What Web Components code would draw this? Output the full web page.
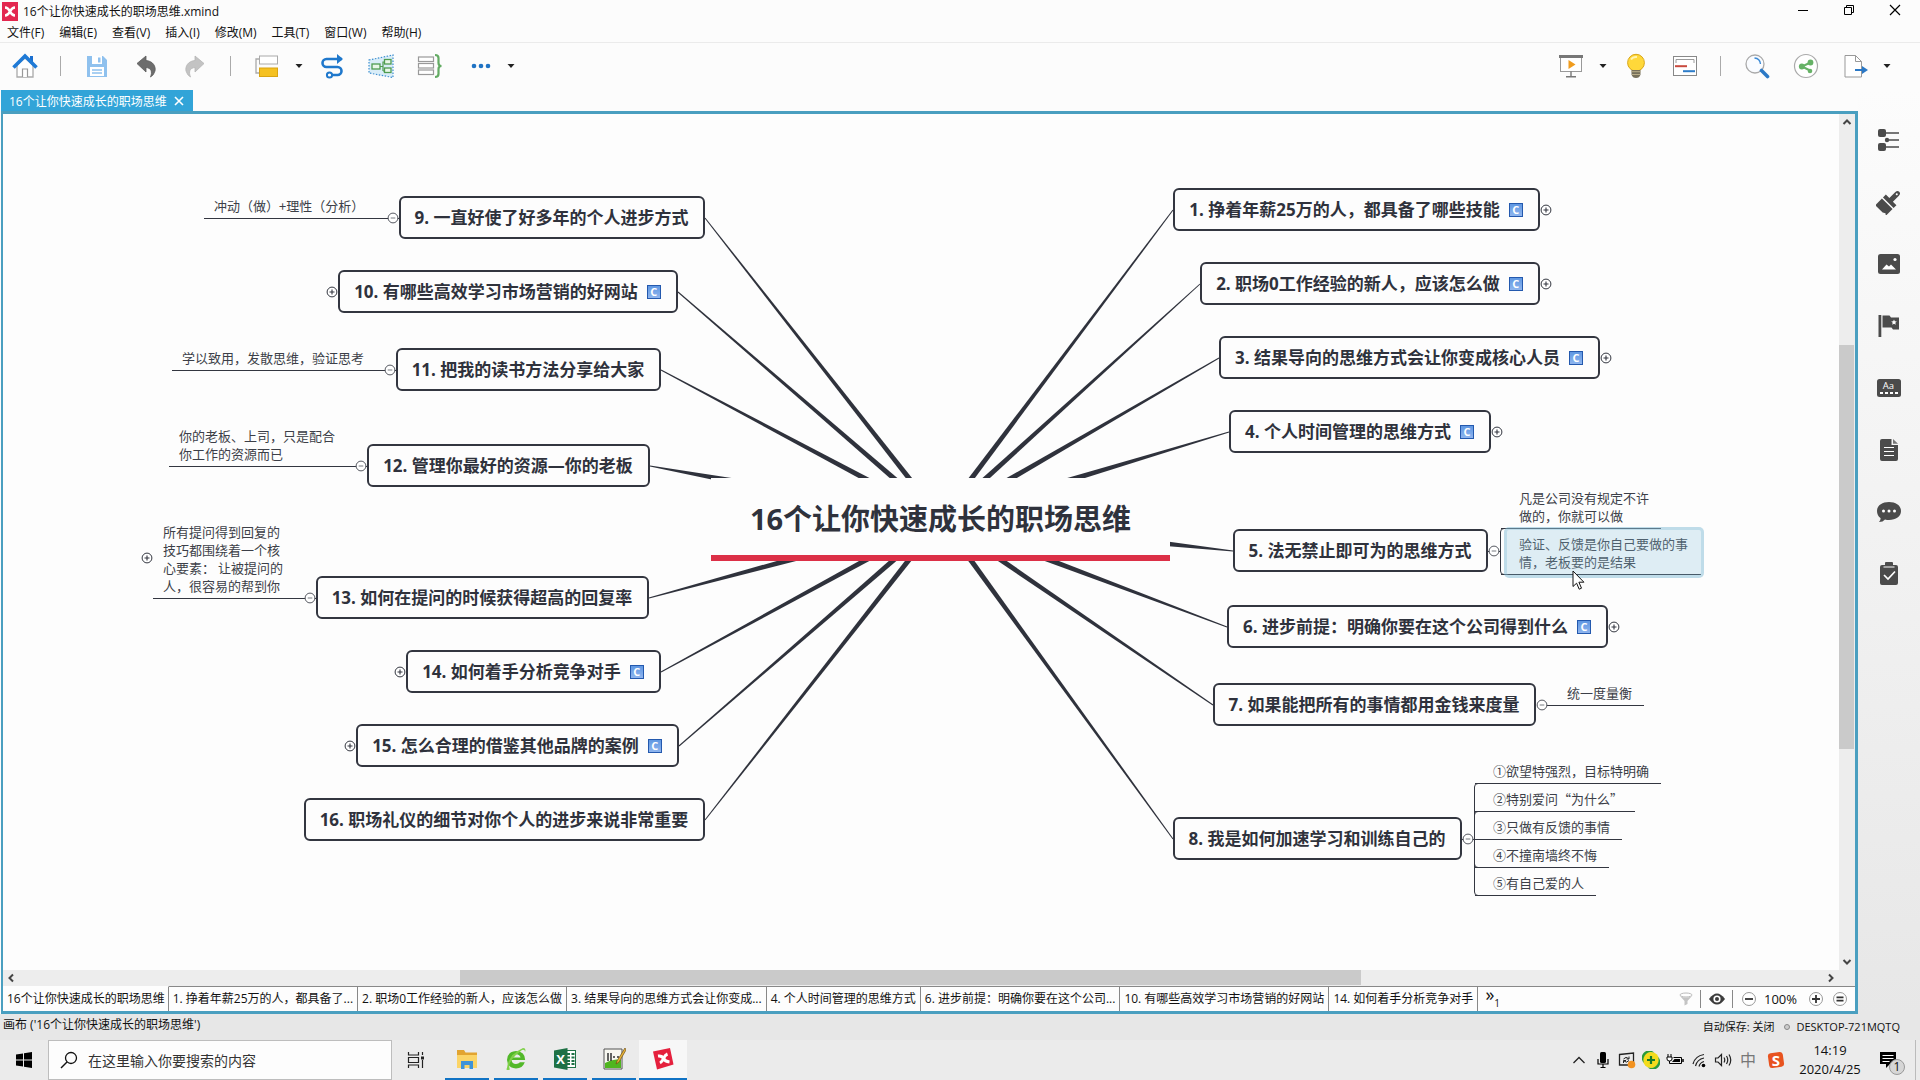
<!DOCTYPE html>
<html lang="zh-CN">
<head>
<meta charset="utf-8">
<title>16个让你快速成长的职场思维.xmind</title>
<style>
html, body { margin: 0; height: 100%; }
body { background: #fcfcfc; color: #111; font: 12px/18px "Open Sans", "Noto Sans CJK SC", sans-serif; overflow: hidden; }
</style>
</head>
<body>
<app-window>
  <title-bar slot="title">16个让你快速成长的职场思维.xmind</title-bar>
  <menu-bar slot="menu" items="文件(F)|编辑(E)|查看(V)|插入(I)|修改(M)|工具(T)|窗口(W)|帮助(H)"></menu-bar>
  <tool-bar slot="tools"></tool-bar>
  <doc-tab slot="tabs">16个让你快速成长的职场思维</doc-tab>
  <mind-map slot="canvas">
    <map-topic x="396" y="82" w="306" side="left" fold="minus">9. 一直好使了好多年的个人进步方式</map-topic>
    <map-topic x="335" y="156" w="340" side="left" fold="plus" marker>10. 有哪些高效学习市场营销的好网站</map-topic>
    <map-topic x="393" y="234" w="265" side="left" fold="minus">11. 把我的读书方法分享给大家</map-topic>
    <map-topic x="364" y="330" w="283" side="left" fold="minus">12. 管理你最好的资源—你的老板</map-topic>
    <map-topic x="313" y="462" w="333" side="left" fold="minus">13. 如何在提问的时候获得超高的回复率</map-topic>
    <map-topic x="403" y="536" w="255" side="left" fold="plus" marker>14. 如何着手分析竞争对手</map-topic>
    <map-topic x="353" y="610" w="323" side="left" fold="plus" marker>15. 怎么合理的借鉴其他品牌的案例</map-topic>
    <map-topic x="301" y="684" w="401" side="left">16. 职场礼仪的细节对你个人的进步来说非常重要</map-topic>
    <map-topic x="1170" y="74" w="367" side="right" fold="plus" marker>1. 挣着年薪25万的人，都具备了哪些技能</map-topic>
    <map-topic x="1197" y="148" w="340" side="right" fold="plus" marker>2. 职场0工作经验的新人，应该怎么做</map-topic>
    <map-topic x="1216" y="222" w="381" side="right" fold="plus" marker>3. 结果导向的思维方式会让你变成核心人员</map-topic>
    <map-topic x="1226" y="296" w="262" side="right" fold="plus" marker>4. 个人时间管理的思维方式</map-topic>
    <map-topic x="1230" y="415" w="255" side="right" fold="minus">5. 法无禁止即可为的思维方式</map-topic>
    <map-topic x="1224" y="491" w="381" side="right" fold="plus" marker>6. 进步前提：明确你要在这个公司得到什么</map-topic>
    <map-topic x="1210" y="569" w="323" side="right" fold="minus">7. 如果能把所有的事情都用金钱来度量</map-topic>
    <map-topic x="1170" y="703" w="289" side="right" fold="minus">8. 我是如何加速学习和训练自己的</map-topic>

    <map-note x="201" y="83" w="184" side="left">冲动（做）+理性（分析）</map-note>
    <map-note x="169" y="235" w="212" side="left">学以致用，发散思维，验证思考</map-note>
    <map-note x="166" y="313" w="186" side="left">你的老板、上司，只是配合<br>你工作的资源而已</map-note>
    <map-note x="150" y="409" w="151" side="left" fold>所有提问得到回复的<br>技巧都围绕着一个核<br>心要素： 让被提问的<br>人，很容易的帮到你</map-note>
    <map-note x="1498" y="375" w="160" side="right">凡是公司没有规定不许<br>做的，你就可以做</map-note>
    <map-note x="1498" y="421" w="200" side="right" selected>验证、反馈是你自己要做的事<br>情，老板要的是结果</map-note>
    <map-note x="1546" y="570" w="95" side="right">统一度量衡</map-note>
    <map-note x="1472" y="648" w="186" side="right">①欲望特强烈，目标特明确</map-note>
    <map-note x="1472" y="676" w="160" side="right">②特别爱问“为什么”</map-note>
    <map-note x="1472" y="704" w="147" side="right">③只做有反馈的事情</map-note>
    <map-note x="1472" y="732" w="134" side="right">④不撞南墙终不悔</map-note>
    <map-note x="1472" y="760" w="121" side="right">⑤有自己爱的人</map-note>
    <span slot="root">16个让你快速成长的职场思维</span>
  </mind-map>
  <sheet-bar slot="sheets" items="16个让你快速成长的职场思维|1. 挣着年薪25万的人，都具备了...|2. 职场0工作经验的新人，应该怎么做|3. 结果导向的思维方式会让你变成...|4. 个人时间管理的思维方式|6. 进步前提：明确你要在这个公司...|10. 有哪些高效学习市场营销的好网站|14. 如何着手分析竞争对手"></sheet-bar>
  <side-bar slot="side"></side-bar>
  <status-bar slot="status"><span>画布 ('16个让你快速成长的职场思维')</span><span slot="save">自动保存: 关闭</span><span slot="host">DESKTOP-721MQTQ</span></status-bar>
  <task-bar slot="taskbar"></task-bar>
</app-window>

<script>
const RESET = `*{box-sizing:border-box} button{border:0;background:none;padding:0;margin:0;font:inherit;color:inherit;display:flex;align-items:center;justify-content:center} svg{display:block}`;

const ICONS = {
  logo: [16, 20, `<rect width="16" height="19" y="0" fill="#e32850"/><path d="M3 5.500q3 0 5 4q2 4 5 4M3 13.500q3 0 5-4q2-4 5-4" fill="none" stroke="#fff" stroke-width="2.600"/>`],
  home: [26, 26, `<path d="M5 12v12h16V12l-8-7z" fill="#fff" stroke="#aaa" stroke-width="1.300"/><path d="M10.500 24v-8h5v8" fill="#fff" stroke="#999" stroke-width="1.200"/><path d="M18 3h3v6h-3z" fill="#1b6fd0"/><path d="M1.500 14.500L13 3l11.500 11.500" fill="none" stroke="#1f7ad6" stroke-width="3.600"/>`],
  save: [26, 26, `<path d="M3 3h16l4 4v17H3z" fill="#8fc1ee"/><path d="M8 3h10v8H8z" fill="#fff"/><path d="M14 4.500h2.500v5H14z" fill="#8fc1ee"/><path d="M6 14h14v9H6z" fill="#fff"/><path d="M8 17h10M8 20h10" stroke="#8fc1ee" stroke-width="1.300"/>`],
  undo: [26, 26, `<path d="M4 10.500L13 3v4.500c7 .5 10 6 9 10.500q-1 4-4.500 6c2-5 1-9-4.500-9.500V19z" fill="#6d6d6d" stroke="#5a5a5a" stroke-width=".8"/>`],
  redo: [26, 26, `<path d="M22 10.500L13 3v4.500C6 8 3 13.500 4 18q1 4 4.500 6C6.500 19 7.500 15 13 14.500V19z" fill="#c3c3c3" stroke="#b5b5b5" stroke-width=".8"/>`],
  topic: [26, 26, `<path d="M5 6H2v14h4" fill="none" stroke="#aaa" stroke-width="1.300"/><rect x="5.500" y="3" width="18" height="8" fill="#fff" stroke="#aaa"/><rect x="5.500" y="15" width="18" height="8.500" fill="#f5c121" stroke="#d9a412"/>`],
  relation: [26, 26, `<path d="M23 6H7.500a4 4 0 0 0 0 8h11a3.700 3.700 0 0 1 0 8H12" fill="none" stroke="#1f78cc" stroke-width="2.600"/><path d="M18 1l6 5-6 5z" fill="#1f78cc"/><circle cx="10.500" cy="22" r="2.600" fill="#fff" stroke="#1f78cc" stroke-width="2"/>`],
  boundary: [28, 26, `<path d="M2 7L26 2v22.500L2 20z" fill="#d9edf8" stroke="#3e8fd0" stroke-width="1.200" stroke-dasharray="1.500 1.500"/><path d="M13 13.500h3M16 18V9h2M16 18h2" stroke="#4f9c50" fill="none" stroke-width="1.200"/><rect x="5" y="11" width="8" height="5" fill="#e8f7e8" stroke="#4f9c50" stroke-width="1.300"/><rect x="17.500" y="6.500" width="6.500" height="4.500" fill="#e8f7e8" stroke="#4f9c50" stroke-width="1.300"/><rect x="17.500" y="15" width="6.500" height="4.500" fill="#e8f7e8" stroke="#4f9c50" stroke-width="1.300"/>`],
  summary: [26, 26, `<g fill="#fff" stroke="#999" stroke-width="1.200"><rect x="1.500" y="4" width="15" height="4.500"/><rect x="1.500" y="10.500" width="15" height="4.500"/><rect x="1.500" y="17" width="15" height="4.500"/></g><path d="M18 2q3.500 0 3.500 3V10q0 3 3 3q-3 0-3 3v5q0 3-3.500 3" fill="none" stroke="#63ab63" stroke-width="2.200"/>`],
  dots: [26, 26, `<g fill="#1f73c4"><circle cx="8" cy="13" r="2.300"/><circle cx="15" cy="13" r="2.300"/><circle cx="22" cy="13" r="2.300"/></g>`],
  caret: [8, 6, `<path d="M0.500 1h7L4 5z" fill="#222"/>`],
  present: [26, 26, `<rect x="2.500" y="4" width="21" height="14.500" fill="#fff" stroke="#999"/><rect x="1" y="2" width="24" height="3" fill="#777"/><path d="M10.500 7v9l7-4.500z" fill="#f09c1e"/><path d="M13 18.500v5M8 23.700h10" stroke="#777" stroke-width="1.400"/>`],
  bulb: [26, 26, `<circle cx="13" cy="9.700" r="8.400" fill="#ffd83a" stroke="#d9a616"/><path d="M8 6.500q2-3 6-2.500" stroke="#fff3b0" fill="none" stroke-width="2"/><path d="M8.500 17h9v4.500q-1 3.500-4.500 3.500t-4.500-3.500z" fill="#77705a"/><path d="M8.500 18.700h9M9 21.500h8" stroke="#b9ad88" stroke-width="1"/>`],
  gantt: [26, 26, `<rect x="1.500" y="3.500" width="23" height="19" fill="#fff" stroke="#888"/><path d="M4 10V6.500h18V10" fill="none" stroke="#9a9a9a"/><path d="M3 13.200h12" stroke="#c94a3e" stroke-width="2"/><path d="M11 18.200h12" stroke="#2d7cc8" stroke-width="2"/>`],
  search: [26, 26, `<circle cx="11" cy="11" r="9" fill="#fafcff" stroke="#aaa" stroke-width="1.300"/><path d="M10.500 5q5.500.5 6 6" stroke="#3c8ad6" fill="none" stroke-width="1.400"/><path d="M17.500 17.500l6 6" stroke="#2c79c6" stroke-width="3.600" stroke-linecap="round"/>`],
  share: [26, 26, `<circle cx="13" cy="13" r="11.500" fill="#fff" stroke="#aaa" stroke-width="1.200"/><path d="M17.500 9.500L9 13.500l8 4" fill="none" stroke="#66b266" stroke-width="2"/><g fill="#66b266"><circle cx="17.500" cy="9.500" r="2.900"/><circle cx="8.800" cy="13.500" r="2.900"/><circle cx="17" cy="18" r="2.300"/></g>`],
  export: [26, 26, `<path d="M3 2.500h10.500l6 6v15.500H3z" fill="#fff" stroke="#999"/><path d="M13.500 2.500v6h6" fill="none" stroke="#999"/><path d="M13 17h8" stroke="#2b78c5" stroke-width="2"/><path d="M20 13l6 4-6 4z" fill="#2b78c5"/>`],
  min: [12, 12, `<path d="M1 6.500h10" stroke="#000"/>`],
  restore: [12, 12, `<path d="M1.500 3.500h7v7h-7zM3.500 3.500v-2h7v7h-2" fill="none" stroke="#000"/>`],
  close: [12, 12, `<path d="M1 1l10 10M11 1L1 11" stroke="#000" stroke-width="1.200"/>`],
  tabclose: [12, 12, `<path d="M2 2l8 8M10 2l-8 8" stroke="#fff" stroke-width="1.600"/>`],
  outline: [24, 24, `<g fill="#4b4b4b"><rect x="1" y="1" width="8" height="8" rx="2"/><rect x="1" y="15" width="8" height="8" rx="2"/><circle cx="10" cy="12" r="2.200"/></g><path d="M9 5h13M12 12h10M9 19h13" stroke="#4b4b4b" stroke-width="1.600"/>`],
  brush: [26, 26, `<g transform="rotate(45 13 13)" fill="#4b4b4b"><path d="M10.500 1.500q0-3 2.500-3t2.500 3V10h5v4h-15v-4h5z"/><path d="M5.500 15.500h15V25l-2-1.500L16 25H5.500z"/><circle cx="13" cy="2" r="1" fill="#fff"/></g>`],
  image: [24, 24, `<rect x="1" y="2" width="22" height="20" rx="2.500" fill="#4b4b4b"/><path d="M5 17.500l4.500-5 2.500 2 2-2 5 5z" fill="#fff"/><circle cx="18" cy="7.500" r="1.600" fill="#fff"/>`],
  flag: [24, 24, `<path d="M1.500 1h2.800v22H1.500zM5.500 1.500h7l1.500 2h8v12h-6l-1.500-2h-9z" fill="#4b4b4b"/><path d="M17 5.500l.8 1.800 2 .2-1.500 1.300.5 2-1.800-1.100-1.800 1.100.5-2-1.500-1.300 2-.2z" fill="#fff"/>`],
  label: [26, 20, `<rect x="1" y="1" width="24" height="18" rx="2.500" fill="#4b4b4b"/><text x="12.500" y="11" font-size="9.500" font-family="Open Sans" text-anchor="middle" fill="#fff">Aa</text><path d="M4 15h18" stroke="#fff" stroke-width="2" stroke-dasharray="3 2"/>`],
  note: [20, 24, `<path d="M3 1h9.500v6H19v14q0 2-2 2H3q-2 0-2-2V3q0-2 2-2z" fill="#4b4b4b"/><path d="M14 1l5 4.800h-5z" fill="#777"/><path d="M5 9.500h10M5 13.500h10M5 17.500h10" stroke="#fff" stroke-width="1.200"/>`],
  chat: [26, 24, `<path d="M13 2c7 0 12 3.500 12 9s-5 9-12 9q-2 0-4-.5Q7 22 3 22q2-2 1.500-4Q1 15.500 1 11c0-5.500 5-9 12-9z" fill="#4b4b4b"/><g fill="#fff"><circle cx="7.500" cy="11" r="1.500"/><circle cx="13" cy="11" r="1.500"/><circle cx="18.500" cy="11" r="1.500"/></g>`],
  task: [20, 26, `<path d="M3 4h3V2q0-1 1-1h6q1 0 1 1v2h3q2 0 2 2v16q0 2-2 2H3q-2 0-2-2V6q0-2 2-2z" fill="#4b4b4b"/><path d="M4.500 6h11" stroke="#fff"/><path d="M5 14l4 4 7-7.500" fill="none" stroke="#fff" stroke-width="1.700"/>`],
  up: [10, 8, `<path d="M1.500 6L5 2.500 8.500 6" fill="none" stroke="#444" stroke-width="2"/>`],
  down: [10, 8, `<path d="M1.500 2L5 5.500 8.500 2" fill="none" stroke="#444" stroke-width="2"/>`],
  left: [8, 10, `<path d="M6 1.500L2.500 5 6 8.500" fill="none" stroke="#444" stroke-width="2"/>`],
  right: [8, 10, `<path d="M2 1.500L5.500 5 2 8.500" fill="none" stroke="#444" stroke-width="2"/>`],
  plus: [12, 12, `<circle cx="6" cy="6" r="4.900" fill="#fff" stroke="#333640"/><path d="M3.500 6h5M6 3.500v5" stroke="#333640" stroke-width="1.100"/>`],
  minus: [12, 12, `<circle cx="6" cy="6" r="4.900" fill="#fff" stroke="#555860"/><path d="M3.700 6h4.600" stroke="#777a80"/>`],
  cursor: [14, 22, `<path d="M1 1v15.500l3.600-3.300 2.600 6 2.300-1-2.600-6h5z" fill="#fff" stroke="#111"/>`],
  filter: [14, 14, `<ellipse cx="7" cy="3" rx="6" ry="2" fill="#fff" stroke="#bbb"/><path d="M1 4l4.500 5v4.500l3-1.500V9L13 4q-6 3-12 0z" fill="#c4c4c4"/>`],
  eye: [16, 14, `<path d="M0 7q8-11 16 0q-8 11-16 0z" fill="#3c3c3c"/><circle cx="8" cy="7" r="3.600" fill="#fff"/><circle cx="8" cy="7" r="2" fill="#3c3c3c"/>`],
  zoomout: [16, 16, `<circle cx="8" cy="8" r="6.500" fill="#fff" stroke="#999"/><path d="M4 8h8" stroke="#333" stroke-width="1.800"/>`],
  zoomin: [16, 16, `<circle cx="8" cy="8" r="6.500" fill="#fff" stroke="#999"/><path d="M4 8h8M8 4v8" stroke="#333" stroke-width="1.800"/>`],
  zoomfit: [16, 16, `<circle cx="8" cy="8" r="6.500" fill="#fff" stroke="#999"/><path d="M4.500 6.300h7M4.500 9.700h7" stroke="#333" stroke-width="1.700"/>`],
  start: [18, 18, `<path d="M1 3.500l7-1v6H1zM9 2.300L17 1v7.500H9zM1 9.500h7v6l-7-1zM9 9.500h8V17l-8-1.300z" fill="#000"/>`],
  find: [18, 18, `<circle cx="11" cy="7" r="5.500" fill="none" stroke="#111" stroke-width="1.300"/><path d="M7 11l-6 6" stroke="#111" stroke-width="1.400"/>`],
  taskview: [18, 18, `<path d="M1.500 1v3h10V1M1.500 17v-3h10v3M1.500 6.500h10v5h-10zM15.500 1v3M15.500 9v8" fill="none" stroke="#222" stroke-width="1.200"/><path d="M14 5.500h3v3h-3z" fill="#222"/>`],
  folder: [24, 24, `<path d="M2 3h7l1.500 2.500H22V21H2z" fill="#e2a431"/><path d="M2 8h20v13H2z" fill="#fbd467"/><path d="M6 22v-8h12v8h-3.500v-4h-5v4z" fill="#3f93d8"/>`],
  browser: [24, 24, `<path d="M16.500 13H7.500q.5 4 4.500 4 2.500 0 4-1.700h4.800Q18.500 21.500 12 21.500 3.500 21 3 13 3.500 4.500 12 4q9 .5 9.200 9zM7.700 10.500h8.800Q16 7.500 12 7.300q-4 .2-4.300 3.200z" fill="#52b829"/><path d="M3 21q-2 3 3 1.500Q2 15 18 3q3-1 3 2 1.500-4-2-4Q4 8 3 21z" fill="#7fd148"/>`],
  excel: [24, 24, `<rect x="11" y="3.500" width="11.500" height="17" fill="#fff" stroke="#1e7145"/><path d="M14 7h3M18.500 7h3M14 10.500h3M18.500 10.500h3M14 14h3M18.500 14h3M14 17h3M18.500 17h3" stroke="#1e7145" stroke-width="1.800"/><path d="M1 3.500L14.500 1v22L1 20.500z" fill="#1e7145"/><text x="7.700" y="17" font-size="13" font-weight="700" font-family="Open Sans" text-anchor="middle" fill="#fff">X</text>`],
  editor: [24, 24, `<path d="M2 2h18v20H2z" fill="#f7f7f0" stroke="#555"/><path d="M3 16q8-5 16-3v8H3z" fill="#4fb51f"/><path d="M6 6v8M9 6v8M11 10h2M15 10h2" stroke="#333" stroke-width="1.500"/><path d="M23 1l-8 13-1 3 3-2 7-12z" fill="#e9b638" stroke="#704c12" stroke-width=".7"/>`],
  xmind: [24, 24, `<path d="M2 4.500L19 1l3.500 16.500L6 22.500z" fill="#e5203d"/><path d="M7 9q4-.5 5.500 2.500T18.500 15M9 16q2-1 3.500-4.500T16.500 7" fill="none" stroke="#fff" stroke-width="3"/>`],
  chevron: [14, 10, `<path d="M1.500 8L7 2.500 12.500 8" fill="none" stroke="#222" stroke-width="1.300"/>`],
  mic: [14, 18, `<rect x="4" y="1" width="6" height="11" rx="1.500"/><path d="M2 8v5h10V8M7 13v3M4.500 16.500h5" fill="none" stroke="#000" stroke-width="1.200"/>`],
  sync: [18, 18, `<path d="M1.500 3.500L15.500 2v12H1.500z" fill="none" stroke="#222" stroke-width="1.300"/><path d="M5.500 8q2.500-3 5-.5M11 9.500q-2.500 3-5 .5M11 5.500v2.500H8.500M5.500 12V9.500H8" fill="none" stroke="#222"/><circle cx="13.500" cy="13.500" r="3.800" fill="#f29321"/>`],
  guard: [18, 18, `<circle cx="9" cy="9" r="8" fill="#f3dc1c"/><path d="M2 12A8 8 0 0 1 9 1l3 .5A7 7 0 0 0 2 12zM16 6A8 8 0 0 1 9 17l-3-.5A7 7 0 0 0 16 6z" fill="#2a9b38"/><path d="M5 9h8M9 5v8" stroke="#157a28" stroke-width="2.200"/>`],
  battery: [18, 14, `<path d="M7.500 4.500h8v6h-11" fill="none" stroke="#000"/><path d="M8.500 6h5.500v3H6z" fill="#000"/><path d="M17 6v3" stroke="#000" stroke-width="1.500"/><path d="M2 1v3M5 1v3M1 4h5v2q0 2-2.500 2T1 6zM3.500 8v2.500h1.500" fill="#fff" stroke="#000"/>`],
  wifi: [16, 16, `<g fill="none" stroke="#222" stroke-width="1.200"><path d="M2 12Q4 4 13 2.500M4.500 14Q6 7.500 13 6M8 14.500q1-4 5-5"/></g><circle cx="12.500" cy="13.500" r="1.800"/>`],
  sound: [18, 16, `<path d="M1.500 6h2.500l3.500-3.500v11L4 10H1.500z" fill="none" stroke="#222" stroke-width="1.200"/><path d="M10 5.500q1.500 2.500 0 5M12.500 4q2.500 4 0 8M15 2.500q3.500 5.500 0 11" fill="none" stroke="#222" stroke-width="1.200"/>`],
  sogou: [18, 18, `<rect x="1.500" y="1.500" width="15" height="15" rx="3" fill="#e8531f" transform="rotate(-8 9 9)"/><text x="9" y="14.500" font-size="15" font-weight="700" font-family="Open Sans" text-anchor="middle" fill="#fff">S</text>`],
  inbox: [18, 18, `<path d="M1 1h16v12h-6l-4 4v-4H1z"/><path d="M3.500 4.500h11M3.500 7.500h11M3.500 10.500h7" stroke="#fff" stroke-width="1.200"/>`]
};
const icon = n => `<ui-icon name="${n}"></ui-icon>`;

function define(tag, render, after) {
  customElements.define(tag, class extends HTMLElement {
    constructor() { super(); this.attachShadow({ mode: 'open' }); }
    connectedCallback() {
      this.shadowRoot.innerHTML = `<style>:host{box-sizing:border-box}${RESET}</style>` + render(this);
      if (after) after(this);
    }
  });
}

define('ui-icon', el => {
  const [w, h, body] = ICONS[el.getAttribute('name')];
  return `<style>:host{display:block;flex:none}</style><svg width="${w}" height="${h}" viewBox="0 0 ${w} ${h}" aria-hidden="true">${body}</svg>`;
});

define('app-window', () => `<style>
  :host{display:flex;flex-direction:column;height:100vh}
  .main{flex:1;min-height:0;display:flex;padding-left:1px}
  .work{flex:1;min-width:0;display:flex;flex-direction:column}
  .frame{flex:1;min-height:0;display:flex;flex-direction:column;border:3px solid #4a9fc0;border-left-width:2px;background:#fdfdfd}
  .view{flex:1;min-height:0;display:flex}
  .canvas{flex:1;min-width:0;display:flex}
  .bar{background:#ededed;display:flex;align-items:center}
  .v{width:16px;flex-direction:column;padding-right:1px}
  .h{height:16px;padding:0 16px 1px 0}
  .bar button{width:16px;height:16px;flex:none}
  .thumb{background:#cacaca;align-self:stretch}
</style>
<slot name="title"></slot><slot name="menu"></slot><slot name="tools"></slot>
<div class="main"><div class="work"><slot name="tabs"></slot>
  <div class="frame">
    <div class="view"><div class="canvas"><slot name="canvas"></slot></div>
      <div class="bar v"><button aria-label="向上滚动">${icon('up')}</button><i style="flex:215"></i><i class="thumb" style="flex:404"></i><i style="flex:205"></i><button aria-label="向下滚动">${icon('down')}</button></div>
    </div>
    <div class="bar h"><button aria-label="向左滚动">${icon('left')}</button><i style="flex:441"></i><i class="thumb" style="flex:901"></i><i style="flex:462"></i><button aria-label="向右滚动">${icon('right')}</button></div>
    <slot name="sheets"></slot>
  </div></div>
  <slot name="side"></slot></div>
<slot name="status"></slot><slot name="taskbar"></slot>`);

define('title-bar', () => `<style>
  :host{display:flex;align-items:center;height:24px;padding-left:2px;gap:5px;flex:none}
  .win{margin-left:auto;display:flex;align-self:flex-start;padding-right:2px}
  .win button{width:46px;height:20px}
</style>${icon('logo')}<slot></slot><div class="win"><button aria-label="最小化">${icon('min')}</button><button aria-label="还原">${icon('restore')}</button><button aria-label="关闭">${icon('close')}</button></div>`);

define('menu-bar', el => `<style>
  :host{display:block;flex:none;border-bottom:1px solid #ebebeb}
  nav{display:flex;gap:15px;padding-left:7px;height:18px}
</style><nav>${el.getAttribute('items').split('|').map(t => `<button>${t}</button>`).join('')}</nav>`);

const tool = (n, l) => n === '|' ? '<i class="sep"></i>' : `<button class="${n === 'caret' ? 'c' : 't'}" aria-label="${l}">${icon(n)}</button>`;
define('tool-bar', () => `<style>
  :host{display:flex;justify-content:space-between;height:47px;padding:0 25px 2px 0;flex:none}
  div{display:flex;align-items:center}
  .t{width:49px;height:36px}.c{width:16px;height:36px}
  .sep{width:1px;height:20px;margin:0 11px;background:#aaa}
</style>
<div>${[['home','主页'],['|'],['save','保存'],['undo','撤销'],['redo','重做'],['|'],['topic','主题'],['caret','更多主题'],['relation','联系'],['boundary','外框'],['summary','概要'],['dots','更多'],['caret','更多选项']].map(a => tool(...a)).join('')}</div>
<div>${[['present','演示'],['caret','演示选项'],['bulb','头脑风暴'],['gantt','甘特图'],['|'],['search','搜索'],['share','分享'],['export','导出'],['caret','导出选项']].map(a => tool(...a)).join('')}</div>`);

define('doc-tab', () => `<style>
  :host{display:flex;height:21px;flex:none}
  div{display:flex;align-items:center;gap:5px;padding:2px 7px 0 8px;background:#32a4d8;color:#fff}
  button{width:14px;height:18px;padding-bottom:2px}
</style><div><slot></slot><button aria-label="关闭标签">${icon('tabclose')}</button></div>`);

const TEXT = '#2f323c';

// Tapered connectors: thin at the topic, full width where they meet the root's box.
function connectors(el) {
  const cx = 938, cy = 405, hw = 230, hh = 42;
  return [...el.querySelectorAll('map-topic')].map(t => {
    const x = +t.getAttribute('x') + (t.getAttribute('side') === 'left' ? +t.getAttribute('w') : 0);
    const y = +t.getAttribute('y') + 22;
    const dx = x - cx, dy = y - cy, len = Math.hypot(dx, dy);
    const edge = 1 - Math.min(hw / Math.abs(dx), hh / Math.abs(dy));
    const a = 0.5, b = a + 2 / Math.max(edge, 0.25);
    const nx = -dy / len, ny = dx / len, p = (X, Y, k) => `${X + nx * k},${Y + ny * k}`;
    return `<polygon points="${p(x, y, a)} ${p(cx, cy, b)} ${p(cx, cy, -b)} ${p(x, y, -a)}"/>`;
  }).join('');
}
define('mind-map', el => `<style>
  :host{display:block;flex:1;position:relative;overflow:hidden;background:#fdfdfd;color:${TEXT}}
  svg{position:absolute;left:0;top:0;width:100%;height:100%}
  .root{position:absolute;left:708px;top:364px;width:459px;height:83px;display:flex;align-items:center;justify-content:center;background:#fdfdfd;border-bottom:6px solid #dc3047;font-size:29px;line-height:40px;font-weight:700;padding-top:4px}
  .ptr{position:absolute;left:1569px;top:456px}
</style>
<svg fill="${TEXT}">${connectors(el)}<g fill="none" stroke="#333640">
<path d="M1482 437.500h15.500M1501 414.500q-3.500 0-3.500 3.500v39q0 3.500 3.500 3.500M1534 591.500h12M1456 725.500h16M1475 669.500q-3.500 0-3.500 3.500v105q0 3.500 3.500 3.500M1475 697.500q-3.500 0-3.500 3.500M1475 753.500q-3.500 0-3.500-3.500M380 104.500h16M380 256.500h14M350 352.500h14M300 484.500h13"/></g></svg>
<div class="root"><slot name="root"></slot></div><slot></slot><div class="ptr">${icon('cursor')}</div>`);

const place = el => { el.style.left = el.getAttribute('x') + 'px'; el.style.top = el.getAttribute('y') + 'px'; el.style.width = el.getAttribute('w') + 'px'; };

define('map-topic', el => `<style>
  :host{position:absolute;display:flex;align-items:center;justify-content:center;gap:9px;height:43px;padding:1px 1px 0 0;border:2px solid #333640;border-radius:6px;background:#fdfdfd;font-size:17px;line-height:24px;font-weight:700;white-space:nowrap}
  .c{width:14px;height:14px;background:linear-gradient(#5f97e2,#8fb5ee);border:1px solid #2459ae;color:#fff;font-size:11px;line-height:12px;text-align:center}
  button{position:absolute;top:14px;width:12px;height:12px}
  :host([side=left]) button{right:100%;margin-right:2px}
  :host([side=right]) button{left:100%;margin-left:2px}
</style><slot></slot>${el.hasAttribute('marker') ? '<span class="c">C</span>' : ''}${el.hasAttribute('fold') ? `<button aria-label="展开或折叠">${icon(el.getAttribute('fold'))}</button>` : ''}`, place);

define('map-note', () => `<style>
  :host{position:absolute;display:block;border-bottom:1px solid #333640;padding:0 0 3px 10px;font:13px/18px "Noto Sans CJK SC",sans-serif;color:#3c3f48;white-space:nowrap}
  :host([side=right]){padding-left:18px}
  button{position:absolute;right:100%;top:29px;margin-right:0;display:none}
  :host([fold]) button{display:flex}
  i{display:none;position:absolute;inset:-8px -3px -4px 3px;background:rgba(135,195,220,.26);border:3px solid rgba(130,185,212,.34);border-radius:5px}
  :host([selected]) i{display:block}
</style><slot></slot><i></i><button aria-label="展开">${icon('plus')}</button>`, place);

define('sheet-bar', el => `<style>
  :host{display:flex;height:25px;flex:none;background:#fdfdfd;color:#111;white-space:nowrap}
  .tabs{display:flex;flex:1;min-width:0}
  .tabs button{padding:0 4px 1px 4px;border-right:1px solid #888;border-top:1px solid #888;flex:none}
  .tabs button:first-child{border-top-color:#fdfdfd;padding-right:3px}
  .rest{flex:1;border-top:1px solid #888;display:flex;padding-left:7px;font-size:18px;line-height:14px}
  sub{font-size:10px;line-height:16px;align-self:flex-end}
  .zoom{display:flex;align-items:center;border-top:1px solid #888;padding-right:3px}
  .zoom button{height:20px;width:24px}
  .zoom .f{width:28px}.zoom .e{width:31px}
  .sep{width:1px;height:18px;background:#888}
  output{width:43px;text-align:center;font-size:13px;padding-right:4px}
  .zoom .o{margin-left:4px}
</style><div class="tabs">${el.getAttribute('items').split('|').map(t => `<button>${t}</button>`).join('')}<div class="rest">»<sub>1</sub></div></div>
<div class="zoom"><button class="f" aria-label="筛选">${icon('filter')}</button><i class="sep"></i><button class="e" aria-label="显示">${icon('eye')}</button><i class="sep"></i><button class="o" aria-label="缩小">${icon('zoomout')}</button><output>100%</output><button aria-label="放大">${icon('zoomin')}</button><button aria-label="适合">${icon('zoomfit')}</button></div>`);

define('side-bar', () => `<style>
  :host{display:flex;flex-direction:column;width:62px;padding-top:19px;background:linear-gradient(#fcfcfc,#e7e7e7);flex:none}
  button{height:62px;width:61px}
</style>${[['outline','大纲'],['brush','格式'],['image','图片'],['flag','图标'],['label','标签'],['note','备注'],['chat','批注'],['task','任务']].map(([n, l]) => `<button aria-label="${l}">${icon(n)}</button>`).join('')}`);

define('status-bar', () => `<style>
  :host{display:flex;align-items:center;height:26px;padding:0 20px 0 3px;background:#e7e7e7;flex:none}
  .l{padding-bottom:4px}
  .r{margin-left:auto;display:flex;align-items:center;gap:6px;font-size:11px}
  .dot{width:6px;height:6px;border:1px solid #888;border-radius:50%;background:#ccc;margin-left:4px}
</style><div class="l"><slot></slot></div><div class="r"><slot name="save"></slot><i class="dot"></i><slot name="host"></slot></div>`);

define('task-bar', () => `<style>
  :host{display:flex;height:40px;background:#ebebeb;flex:none;font-size:13px}
  .start{width:48px}
  label{display:flex;align-items:center;gap:10px;width:344px;padding-left:11px;background:#fdfdfd;border:1px solid #bdbdbd}
  input{border:0;outline:0;background:none;font:14px/20px "Noto Sans CJK SC",sans-serif;padding:0;flex:1;min-width:0}
  input::placeholder{color:#333;opacity:1}
  .tv{width:48px}
  .apps{display:flex;gap:1px;margin-left:3px}
  .apps button{width:48px;border-bottom:2px solid transparent;border-image:linear-gradient(90deg,transparent 4px,#1073c4 4px,#1073c4 44px,transparent 44px) 2}
  .apps .on{background:#f7f7f7;border-image:none;border-color:#1073c4}
  .tray{margin-left:auto;display:flex;align-items:center}
  .tray button{width:24px;height:40px}
  .ime{font-size:16px;color:#777}
  .tray .ime{width:26px}.tray .sg{width:29px}
  .clock{width:80px;text-align:center;line-height:19px}
  .tray .msg{width:36px;position:relative}
  .msg span{position:absolute;left:19px;top:19px;width:16px;height:16px;border-radius:50%;border:1px solid #999;background:#d6d6d6;line-height:14px;font-size:12px}
  .peek{width:5px;height:40px;border-left:1px solid #bbb;margin-left:9px}
</style>
<button class="start" aria-label="开始">${icon('start')}</button>
<label>${icon('find')}<input type="text" aria-label="搜索" placeholder="在这里输入你要搜索的内容"></label>
<button class="tv" aria-label="任务视图">${icon('taskview')}</button>
<div class="apps">${[['folder','文件资源管理器'],['browser','浏览器'],['excel','Excel'],['editor','编辑器']].map(([n, l]) => `<button aria-label="${l}">${icon(n)}</button>`).join('')}<button class="on" aria-label="XMind">${icon('xmind')}</button></div>
<div class="tray">${[['chevron','隐藏的图标'],['mic','麦克风'],['sync','更新'],['guard','安全卫士'],['battery','电池'],['wifi','网络'],['sound','音量']].map(([n, l]) => `<button aria-label="${l}">${icon(n)}</button>`).join('')}<button class="ime">中</button><button class="sg" aria-label="输入法">${icon('sogou')}</button><div class="clock">14:19<br>2020/4/25</div><button class="msg" aria-label="通知">${icon('inbox')}<span>1</span></button><i class="peek"></i></div>`);
</script>
</body>
</html>
